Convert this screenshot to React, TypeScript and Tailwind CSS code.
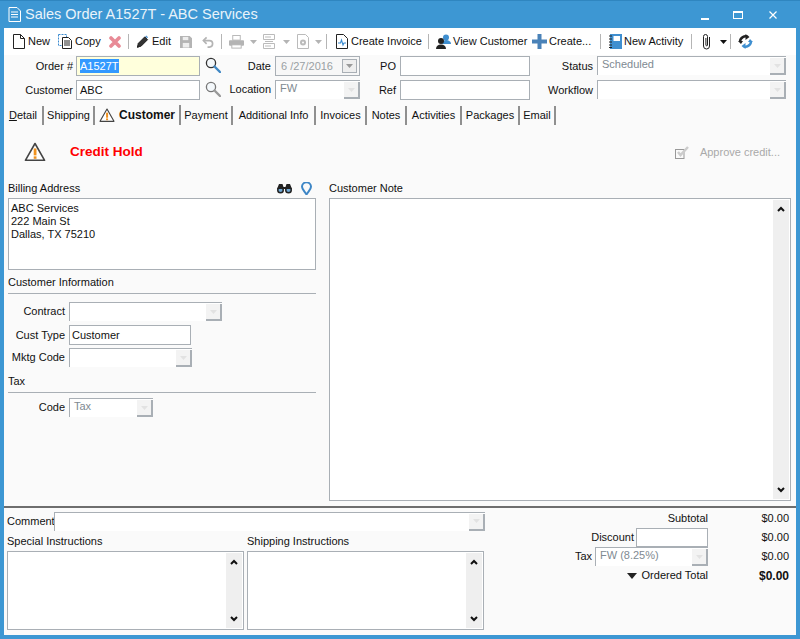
import React from "react";

function Arrow({ c = "#777" }: { c?: string }) {
  return (
    <svg width="7" height="4" viewBox="0 0 7 4" className="block">
      <path d="M0 0h7L3.5 4z" fill={c} />
    </svg>
  );
}

function Combo({ w, text }: { w: string; text?: string }) {
  return (
    <div className={`${w} h-[19px] flex bg-white border-l border-t border-[#a9afb5]`}>
      <div className="flex-1 pl-[4px] leading-[15px] text-[#808a92] truncate">{text}</div>
      <div className="w-[16px] h-[17px] self-end bg-[#f3f3f3] border-r-2 border-b-2 border-[#a9afb5] flex items-center justify-center">
        <Arrow c="#e2e2e2" />
      </div>
    </div>
  );
}

function Scrollbar() {
  return (
    <div className="w-[16px] flex flex-col justify-between items-center bg-[#efefef] py-[6px]">
      <svg width="8" height="6" viewBox="0 0 8 6"><path d="M1 5l3-3 3 3" fill="none" stroke="#111" strokeWidth="2" /></svg>
      <svg width="8" height="6" viewBox="0 0 8 6"><path d="M1 1l3 3 3-3" fill="none" stroke="#111" strokeWidth="2" /></svg>
    </div>
  );
}

function Sep({ ml }: { ml: string }) {
  return <div className={`${ml} w-px h-[15px] bg-[#b5b5b5]`} />;
}

function Search({ faded }: { faded?: boolean }) {
  return (
    <svg width="16" height="16" viewBox="0 0 16 16" className="block">
      <circle cx="6" cy="6" r="4.6" fill="#f4f8fb" stroke={faded ? "#777" : "#333"} strokeWidth="1.3" />
      <path d="M9.5 9.5L15 15" stroke={faded ? "#999" : "#3f87c4"} strokeWidth="2.4" strokeLinecap="round" />
    </svg>
  );
}

function Warning({ size = 22 }: { size?: number }) {
  return (
    <svg width={size} height={size * 0.9} viewBox="0 0 22 20" className="block">
      <path d="M11 1.5L20.7 18.5H1.3z" fill="#fff" stroke="#444" strokeWidth="1.6" strokeLinejoin="round" />
      <rect x="9.700" y="6.500" width="2.800" height="7" fill="#f0921e" />
      <rect x="9.700" y="14.500" width="2.800" height="2.500" fill="#f0921e" />
    </svg>
  );
}

function Tab({ w, children, active }: { w: string; children: React.ReactNode; active?: boolean }) {
  return (
    <div
      className={`${w} ${active ? "h-[20px] font-bold text-[12px]" : "h-[19px]"} flex items-center justify-center border-r-2 border-[#8f8f8f]`}
    >
      {children}
    </div>
  );
}

export default function App() {
  return (
    <div
      className="w-[800px] h-[639px] bg-[#3d97d3] flex flex-col overflow-hidden text-[11px] text-[#111] border-t border-[#2f86c0]"
      style={{ fontFamily: '"Liberation Sans", Arial, sans-serif' }}
    >
      {/* Title bar */}
      <div className="h-[27px] flex items-center shrink-0">
        <svg width="13" height="15" viewBox="0 0 13 15" className="ml-[8px]">
          <path d="M1 .5h8l3.500 3.500v10.500H1z" fill="none" stroke="#fff" strokeWidth="1" />
          <path d="M3 5h7M3 7.500h7M3 10h7" stroke="#fff" strokeWidth="1" />
        </svg>
        <div className="ml-[4px] text-[14.5px] text-[#e9f3fa] whitespace-nowrap">Sales Order A1527T - ABC Services</div>
        <div className="ml-auto flex items-center mr-[23px]">
          <div className="w-[8px] h-[2px] bg-white mt-[8px]" />
          <div className="ml-[24px] w-[10px] h-[8px] border border-white border-t-2" />
          <svg width="8" height="8" viewBox="0 0 8 8" className="ml-[26px]">
            <path d="M.5.5l7 7M7.500.5l-7 7" stroke="#fff" strokeWidth="1.2" />
          </svg>
        </div>
      </div>

      {/* Window body */}
      <div className="flex-1 mx-[4px] mb-[4px] flex flex-col bg-[#fafafa] min-h-0">
        {/* Toolbar */}
        <div className="h-[27px] shrink-0 bg-white flex items-center pl-[9px] whitespace-nowrap">
          <svg width="12" height="15" viewBox="0 0 12 15">
            <path d="M.5.5h7l4 4v10H.5z" fill="#fff" stroke="#222" />
            <path d="M7.500.5v4h4" fill="none" stroke="#222" />
          </svg>
          <span className="ml-[3px] w-[30px]">New</span>
          <svg width="14" height="15" viewBox="0 0 14 15">
            <rect x=".5" y=".5" width="8" height="11" fill="#fff" stroke="#3a8bd0" strokeDasharray="2 1" />
            <path d="M4.500 3.500h6l3 3v8h-9z" fill="#fff" stroke="#222" />
            <path d="M6 7h6M6 9h6M6 11h6" stroke="#222" />
          </svg>
          <span className="ml-[3px] w-[34px]">Copy</span>
          <svg width="12" height="12" viewBox="0 0 12 12">
            <path d="M2 2l8 8M10 2l-8 8" stroke="#e88a96" strokeWidth="3.6" strokeLinecap="round" />
          </svg>
          <Sep ml="ml-[7px]" />
          <svg width="13" height="15" viewBox="0 0 14 15" className="ml-[7px]">
            <path d="M1.500 13.500l1-4 7-7 3 3-7 7z" fill="#333" stroke="#222" />
            <path d="M10 2l1-1 2 2-1 1z" fill="#4a90d0" />
            <path d="M1 14.500l1-2.500 1.500 1.500z" fill="#222" />
          </svg>
          <span className="ml-[3px] w-[28px]">Edit</span>
          <svg width="12" height="12" viewBox="0 0 13 13">
            <path d="M0 0h10.500L13 2.500V13H0z" fill="#b4b4b4" />
            <rect x="3" y="1" width="6" height="3.500" fill="#eee" />
            <rect x="3" y="7.500" width="7" height="5" fill="#eee" />
          </svg>
          <svg width="12" height="12" viewBox="0 0 13 12" className="ml-[10px]">
            <path d="M5 1L1.500 4.500 5 8" fill="none" stroke="#b4b4b4" strokeWidth="1.8" />
            <path d="M2 4.500h6a3.500 3.500 0 010 7H6" fill="none" stroke="#b4b4b4" strokeWidth="1.8" />
          </svg>
          <Sep ml="ml-[7px]" />
          <svg width="15" height="14" viewBox="0 0 16 14" className="ml-[7px]">
            <rect x="4" y="0" width="8" height="5" fill="#fff" stroke="#b4b4b4" />
            <rect x="0" y="5" width="16" height="6" rx="1" fill="#b4b4b4" />
            <rect x="3" y="10" width="10" height="3.500" fill="#fff" stroke="#b4b4b4" />
          </svg>
          <span className="ml-[6px]"><Arrow c="#b4b4b4" /></span>
          <svg width="12" height="15" viewBox="0 0 12 15" className="ml-[6px]">
            <path d="M.5.5h11v5H.5zM.5 9.500h11v5H.5z" fill="#fff" stroke="#bbb" />
            <path d="M2 3h6M2 7.500h8M2 12h6" stroke="#bbb" />
          </svg>
          <span className="ml-[8px]"><Arrow c="#b4b4b4" /></span>
          <svg width="12" height="15" viewBox="0 0 12 15" className="ml-[7px]">
            <path d="M.5.5h8l3 3v11H.5z" fill="#fff" stroke="#bbb" />
            <circle cx="6" cy="8.500" r="3" fill="#bbb" />
            <circle cx="6" cy="8.500" r="1" fill="#fff" />
          </svg>
          <span className="ml-[6px]"><Arrow c="#b4b4b4" /></span>
          <Sep ml="ml-[4px]" />
          <svg width="12" height="15" viewBox="0 0 12 15" className="ml-[9px]">
            <path d="M.5.5h7l4 4v10H.5z" fill="#fff" stroke="#222" />
            <path d="M2 9h2.500l1-3 1.500 5 1-2H10" fill="none" stroke="#3a8bd0" strokeWidth="1.1" />
          </svg>
          <span className="ml-[3px] w-[77px]">Create Invoice</span>
          <Sep ml="ml-0" />
          <svg width="15" height="15" viewBox="0 0 15 15" className="ml-[7px]">
            <circle cx="10" cy="3.500" r="3" fill="#3f8fd0" />
            <path d="M6 10c0-3 2-4 4-4s5 1 5 4z" fill="#3f8fd0" />
            <circle cx="5" cy="7" r="3" fill="#222" />
            <path d="M0 15c0-3 2-4.500 5-4.500s5 1.500 5 4.500z" fill="#222" />
          </svg>
          <span className="ml-[2px] w-[79px]">View Customer</span>
          <svg width="15" height="15" viewBox="0 0 15 15">
            <path d="M5.500 0h4v5.500H15v4H9.500V15h-4V9.500H0v-4h5.500z" fill="#4a82b8" />
          </svg>
          <span className="ml-[2px] w-[51px]">Create...</span>
          <Sep ml="ml-0" />
          <svg width="13" height="15" viewBox="0 0 13 15" className="ml-[8px]">
            <rect x="1" y="0" width="12" height="15" fill="#3f8fd0" />
            <rect x="4.500" y="2" width="6.500" height="5" fill="#fff" />
            <path d="M0 2h3M0 5h3M0 8h3M0 11h3M0 13.500h3" stroke="#222" />
          </svg>
          <span className="ml-[2px] w-[67px]">New Activity</span>
          <Sep ml="ml-0" />
          <svg width="9" height="17" viewBox="0 0 9 17" className="ml-[10px]">
            <path d="M7.500 4v9a3 3 0 01-6 0V3.500a2 2 0 014 0V12a.8.800 0 01-1.600 0V5" fill="none" stroke="#222" strokeWidth="1" />
          </svg>
          <span className="ml-[9px]"><Arrow c="#111" /></span>
          <Sep ml="ml-[3px]" />
          <svg width="15" height="15" viewBox="0 0 15 15" className="ml-[7px]">
            <path d="M10 3A5.500 5.500 0 002 7.500" fill="none" stroke="#222" strokeWidth="2.500" />
            <path d="M7.500 0l4 3-4 3zM0 7h5l-2 3z" fill="#222" />
            <path d="M5 12a5.500 5.500 0 008-4.500" fill="none" stroke="#3f8fd0" strokeWidth="2.500" />
            <path d="M7.500 15l-4-3 4-3zM15 8h-5l2-3z" fill="#3f8fd0" />
          </svg>
        </div>

        {/* Header form */}
        <div className="shrink-0 pt-px whitespace-nowrap">
          <div className="h-[24px] flex pt-0">
            <span className="w-[69px] h-[20px] leading-[20px] text-right">Order #</span>
            <div className="ml-[3px] w-[124px] h-[20px] border border-[#a9afb5] bg-[#ffffdc] pl-[3px] flex items-center">
              <span className="bg-[#3399ff] text-white leading-[14px]">A1527T</span>
            </div>
            <span className="ml-[5px] mt-[1px]"><Search /></span>
            <span className="ml-[3px] w-[47px] h-[20px] leading-[20px] text-right">Date</span>
            <div className="ml-[4px] w-[85px] h-[20px] border border-[#a9afb5] bg-[#f7f7f7] flex items-center pl-[5px] text-[#9a9fa3] justify-between">
              <span>6 /27/2016</span>
              <div className="w-[15px] h-[14px] mr-[2px] border border-[#a9afb5] bg-[#eee] flex items-center justify-center"><Arrow c="#999" /></div>
            </div>
            <span className="w-[36px] h-[20px] leading-[20px] text-right">PO</span>
            <div className="ml-[4px] w-[130px] h-[20px] border border-[#a9afb5] bg-white" />
            <span className="w-[63px] h-[20px] leading-[20px] text-right">Status</span>
            <div className="ml-[4px]"><Combo w="w-[189px]" text="Scheduled" /></div>
          </div>
          <div className="h-[24px] flex">
            <span className="w-[69px] h-[20px] leading-[20px] text-right">Customer</span>
            <div className="ml-[3px] w-[124px] h-[20px] border border-[#a9afb5] bg-white pl-[3px] flex items-center">ABC</div>
            <span className="ml-[5px] mt-[1px]"><Search faded /></span>
            <span className="ml-[3px] w-[47px] h-[19px] leading-[19px] text-right">Location</span>
            <div className="ml-[4px]"><Combo w="w-[85px]" text="FW" /></div>
            <span className="w-[36px] h-[20px] leading-[20px] text-right">Ref</span>
            <div className="ml-[4px] w-[130px] h-[20px] border border-[#a9afb5] bg-white" />
            <span className="w-[63px] h-[20px] leading-[20px] text-right">Workflow</span>
            <div className="ml-[4px]"><Combo w="w-[189px]" /></div>
          </div>
        </div>

        {/* Tabs */}
        <div className="shrink-0 h-[22px] flex items-end pb-[1px] whitespace-nowrap">
          <Tab w="w-[40px]"><span><span className="underline">D</span>etail</span></Tab>
          <Tab w="w-[51px]">Shipping</Tab>
          <Tab w="w-[86px]" active>
            <span className="mr-[4px]"><Warning size={16} /></span>Customer
          </Tab>
          <Tab w="w-[52px]">Payment</Tab>
          <Tab w="w-[83px]">Additional Info</Tab>
          <Tab w="w-[51px]">Invoices</Tab>
          <Tab w="w-[40px]">Notes</Tab>
          <Tab w="w-[55px]">Activities</Tab>
          <Tab w="w-[58px]">Packages</Tab>
          <Tab w="w-[36px]">Email</Tab>
        </div>

        {/* Main */}
        <div className="flex-1 min-h-0 flex flex-col">
          <div className="h-[52px] shrink-0 flex items-center">
            <span className="ml-[20px]"><Warning /></span>
            <span className="ml-[24px] text-[13.5px] font-bold text-[#ff0000]">Credit Hold</span>
            <svg width="14" height="13" viewBox="0 0 14 13" className="ml-auto">
              <rect x=".5" y="3.500" width="8.500" height="9" fill="none" stroke="#999" />
              <path d="M3 6l2.500 3L13 1" fill="none" stroke="#ccc" strokeWidth="2.500" />
            </svg>
            <span className="ml-[8px] mr-[16px] text-[#a9a9a9] w-[83px] text-right whitespace-nowrap">Approve credit...</span>
          </div>
          <div className="flex-1 min-h-0 flex pb-[5px]">
            <div className="ml-[4px] w-[308px] shrink-0">
              <div className="h-[20px] flex items-center justify-between">
                <span>Billing Address</span>
                <span className="flex items-center">
                  <svg width="15" height="11" viewBox="0 0 15 11">
                    <circle cx="3.500" cy="7" r="3.500" fill="#222" />
                    <circle cx="11.500" cy="7" r="3.500" fill="#222" />
                    <circle cx="3.500" cy="7" r="2" fill="#6fa8d6" />
                    <circle cx="11.500" cy="7" r="2" fill="#6fa8d6" />
                    <path d="M2 1h3.500l1 3h2l1-3H13l2 5H0z" fill="#222" />
                  </svg>
                  <svg width="11" height="13" viewBox="0 0 11 13" className="ml-[9px] mr-[4px]">
                    <path d="M5.500 12.500C3 8.500 1 7 1 4.800a4.500 4.500 0 019 0C10 7 8 8.500 5.500 12.500z" fill="none" stroke="#3d86c6" strokeWidth="2" />
                  </svg>
                </span>
              </div>
              <div className="h-[72px] border border-[#a9afb5] bg-white pl-[2px] pt-[3px] leading-[13px]">
                <div>ABC Services</div>
                <div>222 Main St</div>
                <div>Dallas, TX 75210</div>
              </div>
              <div className="h-[24px] border-b border-[#a9afb5] leading-[25px]">Customer Information</div>
              <div className="mt-[8px] flex items-center h-[19px]">
                <span className="w-[57px] text-right">Contract</span>
                <span className="ml-[4px]"><Combo w="w-[153px]" /></span>
              </div>
              <div className="mt-[4px] flex items-center h-[20px]">
                <span className="w-[57px] text-right">Cust Type</span>
                <div className="ml-[4px] w-[122px] h-[20px] border border-[#a9afb5] bg-white pl-[2px] flex items-center">Customer</div>
              </div>
              <div className="mt-[3px] flex items-center h-[19px] whitespace-nowrap">
                <span className="w-[57px] text-right">Mktg Code</span>
                <span className="ml-[4px]"><Combo w="w-[123px]" /></span>
              </div>
              <div className="h-[26px] border-b border-[#a9afb5] leading-[28px]">Tax</div>
              <div className="mt-[5px] flex items-center h-[19px]">
                <span className="w-[57px] text-right">Code</span>
                <span className="ml-[4px]"><Combo w="w-[84px]" text="Tax" /></span>
              </div>
            </div>
            <div className="ml-[13px] w-[462px] flex flex-col">
              <div className="h-[20px] flex items-center">Customer Note</div>
              <div className="flex-1 min-h-0 border border-[#a9afb5] bg-white flex justify-end pr-[1px] py-[1px]">
                <Scrollbar />
              </div>
            </div>
          </div>
        </div>

        {/* Footer */}
        <div className="shrink-0 h-[129px] border-t-2 border-[#6e6e6e] flex">
          <div className="ml-[3px] w-[478px]">
            <div className="flex items-center mt-[3px] h-[20px]">
              <span className="w-[47px] whitespace-nowrap">Comment</span>
              <Combo w="w-[431px]" />
            </div>
            <div className="flex">
              <div className="w-[237px]">
                <div className="h-[20px] leading-[20px]">Special Instructions</div>
                <div className="h-[79px] border border-[#a9afb5] bg-white flex justify-end py-[1px] pr-[1px]"><Scrollbar /></div>
              </div>
              <div className="ml-[3px] w-[237px]">
                <div className="h-[20px] leading-[20px]">Shipping Instructions</div>
                <div className="h-[79px] border border-[#a9afb5] bg-white flex justify-end py-[1px] pr-[1px]"><Scrollbar /></div>
              </div>
            </div>
          </div>
          <div className="flex-1 pt-[1px]">
            <div className="h-[19px] flex items-center justify-end">
              <span>Subtotal</span>
              <span className="w-[81px] mr-[7px] text-right">$0.00</span>
            </div>
            <div className="h-[19px] flex items-center justify-end">
              <span className="mr-[2px]">Discount</span>
              <div className="w-[72px] h-[19px] border border-[#a9afb5] bg-white" />
              <span className="w-[81px] mr-[7px] text-right">$0.00</span>
            </div>
            <div className="h-[19px] flex items-center justify-end">
              <span className="mr-[3px]">Tax</span>
              <Combo w="w-[113px]" text="FW (8.25%)" />
              <span className="w-[81px] mr-[7px] text-right">$0.00</span>
            </div>
            <div className="h-[19px] flex items-center justify-end">
              <svg width="10" height="6" viewBox="0 0 10 6" className="mr-[5px]"><path d="M0 0h10L5 6z" fill="#222" /></svg>
              <span>Ordered Total</span>
              <span className="w-[81px] mr-[7px] text-right font-bold text-[12px]">$0.00</span>
            </div>
          </div>
        </div>
      </div>
    </div>
  );
}
